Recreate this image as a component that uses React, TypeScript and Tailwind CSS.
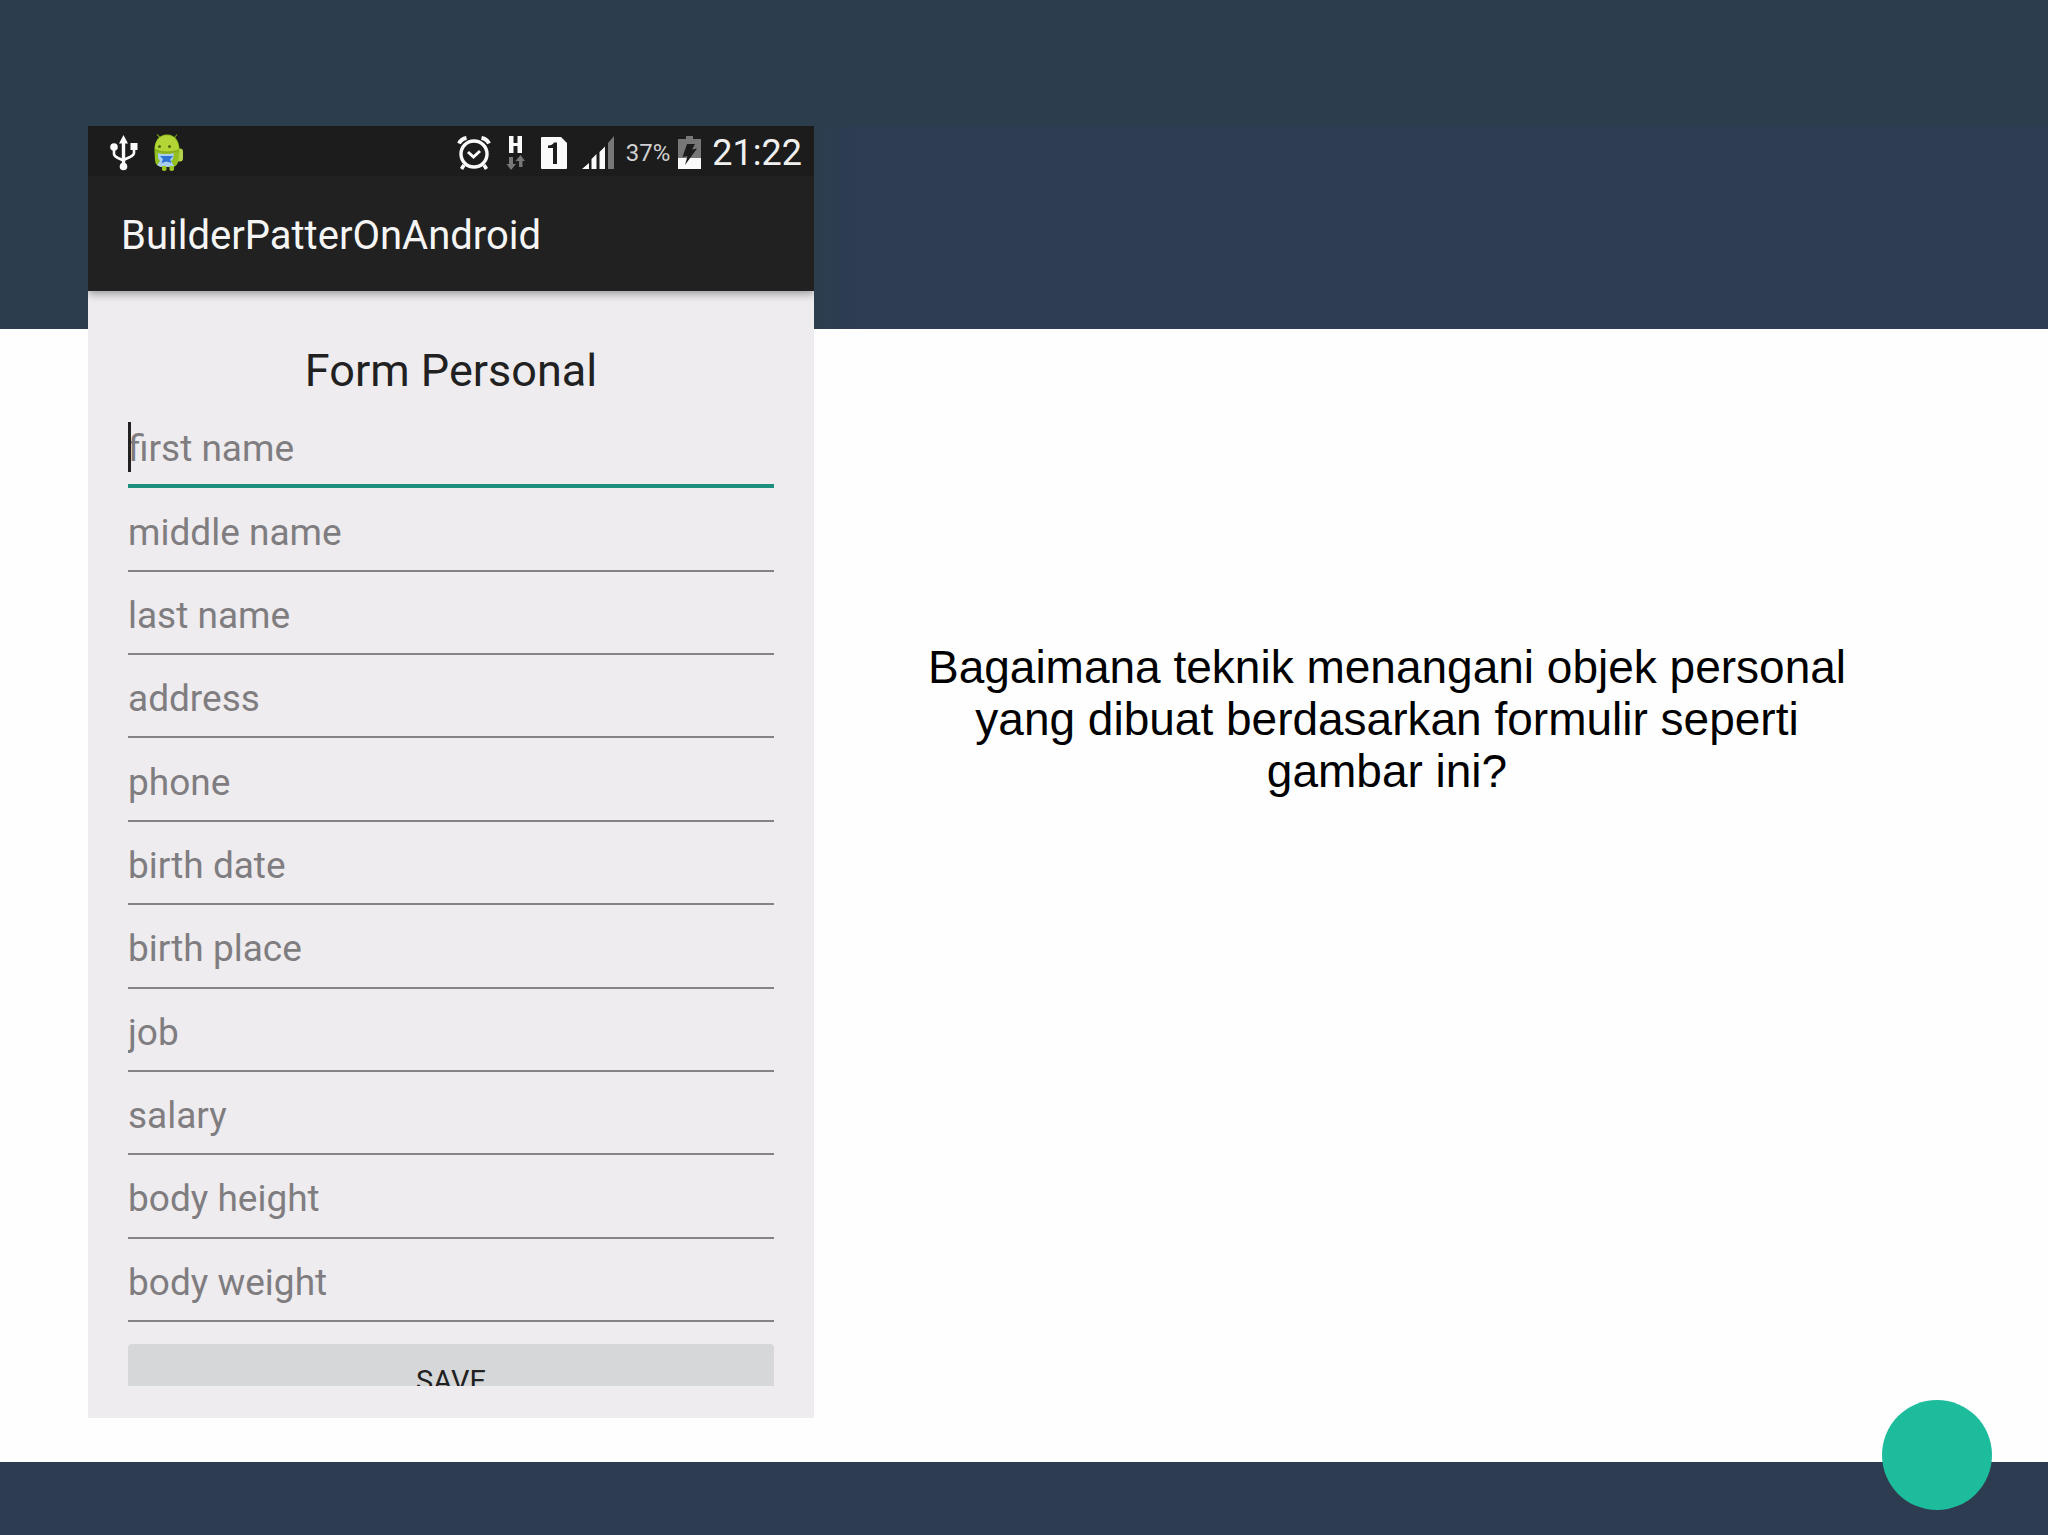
const fields = [
  "first name",
  "middle name",
  "last name",
  "address",
  "phone",
  "birth date",
  "birth place",
  "job",
  "salary",
  "body height",
  "body weight",
];

function UsbIcon() {
  return (
    <svg viewBox="0 0 28 36" className="w-7 h-9" fill="none" stroke="#fafafa" strokeWidth="2.6">
      <path d="M13.5 6v25" strokeWidth="3.4" />
      <path d="M4 13v6c0 2 2 3 4 4l5.5 2.5" />
      <path d="M24 13v5c0 2-2 3-4 4l-6.5 3" />
      <path d="M13.5 0l4.5 8.500h-9z" fill="#fafafa" stroke="none" />
      <circle cx="4" cy="12" r="3.8" fill="#fafafa" stroke="none" />
      <path d="M20.5 8h7v7h-7z" fill="#fafafa" stroke="none" />
      <circle cx="13.5" cy="31.5" r="3.8" fill="#fafafa" stroke="none" />
    </svg>
  );
}

function DroidIcon() {
  return (
    <svg viewBox="0 0 30 38" className="w-[30px] h-[38px]">
      <path d="M3 0.500l4 4M23 0.500l-3 4" stroke="#6f9a16" strokeWidth="1.2" />
      <path d="M23 15l3-0.500q3 0 3 3v7q0 3-3 3h-4z" fill="#b4d24a" />
      <path d="M0.500 17C0 7 5 0.500 13 0.500S26 7 25.500 17L24.500 26q-1 7-6 7H8Q1 32 1 26z" fill="#93bf1f" />
      <path d="M1 15C1 7 6 1.500 13 1.500S24 7 24.500 15q-11 5-23.500 0z" fill="#b3d536" />
      <path d="M1 15.500q11 4 24 0.500v1q-12 4-24 0z" fill="#86ab20" />
      <circle cx="5.500" cy="12.500" r="1.500" fill="#4b6b10" />
      <circle cx="15.500" cy="12.500" r="1.500" fill="#4b6b10" />
      <path d="M4 19l4 1h8l4-1-1 6-2 2 3 5-4 1H7l-4-2 3-4-2-3z" fill="#a8cdee" />
      <path d="M6 22h13l-3 3.500 1.500 3.500-5-1.500-5 1.500 1.500-4z" fill="#2f74d0" />
      <path d="M8 32h4.500v4q-2.500 2-4.500 0zM15.500 32H20v4q-2.500 2-4.500 0z" fill="#9cc523" />
    </svg>
  );
}

function AlarmIcon() {
  return (
    <svg viewBox="0 0 34 36" className="w-[34px] h-9" fill="none" stroke="#fafafa">
      <circle cx="17" cy="19" r="13" strokeWidth="3.4" />
      <path d="M11 17l5.500 5 6.500-6" strokeWidth="3" />
      <path d="M7 30l-2.500 4M27 30l2.500 4" strokeWidth="3.6" />
      <path d="M2 8.500Q4 4 9.500 3M32 8.500Q30 4 24.500 3" strokeWidth="4" />
    </svg>
  );
}

function NetworkIcon() {
  return (
    <svg viewBox="0 0 20 36" className="w-5 h-9">
      <path d="M3 1h4.500v7h4V1H16v17h-4.500v-7h-4v7H3z" fill="#fafafa" />
      <path d="M3 22h4v7h3L5 35 0.500 29H3zM13 32v-6h-3.500L14.500 20l4.500 6h-2.500v6z" fill="#777" />
    </svg>
  );
}

function SimIcon() {
  return (
    <svg viewBox="0 0 26 32" className="w-[26px] h-8">
      <path d="M1 0h19l6 6v25q0 1-1 1H1q-1 0-1-1V1q0-1 1-1z" fill="#fafafa" />
      <path d="M12 27V11H7V8.500q4.500 0 6-3h3V27z" fill="#1c1c1c" />
    </svg>
  );
}

function SignalIcon() {
  return (
    <svg viewBox="0 0 34 34" className="w-[34px] h-[34px]" fill="#fafafa">
      <path d="M0 33l7-6v6zM9.500 33V23l5-5v15zM17.500 33V16l5.500-5.500V33z" />
      <path d="M26 33V7l6-7v33z" fill="#777" />
    </svg>
  );
}

function BatteryIcon() {
  return (
    <svg viewBox="0 0 24 34" className="w-6 h-[34px]">
      <path d="M0 3h8V0h7v3h8v19H0z" fill="#777" />
      <path d="M0 22h23v11H0z" fill="#fafafa" />
      <path d="M9 8h8l-3 5.500 5-1L7 29l2.500-9-5 1z" fill="#1c1c1c" />
    </svg>
  );
}

function StatusBar() {
  return (
    <div className="flex h-[50px] items-center bg-[#1c1c1c] pl-[22px] pr-3 pt-[3px] text-[#f0f0f0]">
      <div className="flex items-center gap-4 grow">
        <UsbIcon />
        <DroidIcon />
      </div>
      <div className="flex items-center gap-[15px]">
        <AlarmIcon />
        <NetworkIcon />
        <SimIcon />
        <SignalIcon />
      </div>
      <div className="flex items-center gap-2 pl-2.5">
        <span className="text-2xl leading-8 text-[#d0d0d0]">37%</span>
        <BatteryIcon />
        <span className="pl-0.5 text-4xl leading-8">21:22</span>
      </div>
    </div>
  );
}

function PersonalForm() {
  return (
    <form className="px-10 pb-8">
      <h2 className="pt-[54px] pb-2 text-center text-[45px] leading-[52px] text-[#212121]">
        Form Personal
      </h2>

      <div className="grid h-[917px] grid-rows-11">
        {fields.map((name, i) => (
          <label key={name} className="relative block">
            {/* text cursor of the focused field */}
            {i === 0 && (
              <span className="absolute left-0 top-[17px] h-[50px] w-[3px] bg-[#212121]" />
            )}
            <input
              type="text"
              aria-label={name}
              placeholder={name}
              className={
                i === 0
                  ? "block h-full w-full border-b-4 border-[#1b8f7d] pt-2 text-[37px] outline-none placeholder:text-[#7f7d80]"
                  : "block h-full w-full border-b-2 border-[#858386] pt-1.5 text-[37px] outline-none placeholder:text-[#7f7d80]"
              }
            />
          </label>
        ))}
      </div>

      {/* the button is cut off by the end of the scroll area */}
      <div className="mt-[22px] h-[42px] overflow-hidden">
        <button
          type="button"
          className="h-[76px] w-full rounded bg-[#d6d7d8] text-[29px] text-[#212121]"
        >
          SAVE
        </button>
      </div>
    </form>
  );
}

export default function App() {
  return (
    <div className="flex min-h-screen flex-col bg-[#fefefe]">
      <div className="h-[329px] bg-[linear-gradient(#2c3e4e_38%,transparent_39%),linear-gradient(90deg,#2c3e4e_40%,#2e3c54_42%)]" />

      <main className="relative -mt-[203px] flex grow items-start pl-22 pb-11">
        <section className="w-[726px] shrink-0 overflow-hidden bg-[#eeecef] font-[Roboto,sans-serif]">
          <div className="relative bg-[#212121] shadow-[0_3px_8px_rgba(0,0,0,0.35)]">
            <StatusBar />
            <h1 className="px-[33px] pt-9 pb-[31px] text-[40px] leading-12 text-[#f5f5f5]">
              BuilderPatterOnAndroid
            </h1>
          </div>
          <PersonalForm />
        </section>

        <p className="grow basis-0 mr-22 px-24 pt-[515px] text-center text-[46px] leading-[52px] text-black font-['Liberation_Sans',Arial,sans-serif]">
          Bagaimana teknik menangani objek personal yang dibuat berdasarkan
          formulir seperti gambar ini?
        </p>
      </main>

      <footer className="relative h-[73px] bg-[#2d3c50]">
        <span className="absolute right-14 bottom-[25px] size-[110px] rounded-full bg-[#1dbc9d]" />
      </footer>
    </div>
  );
}
